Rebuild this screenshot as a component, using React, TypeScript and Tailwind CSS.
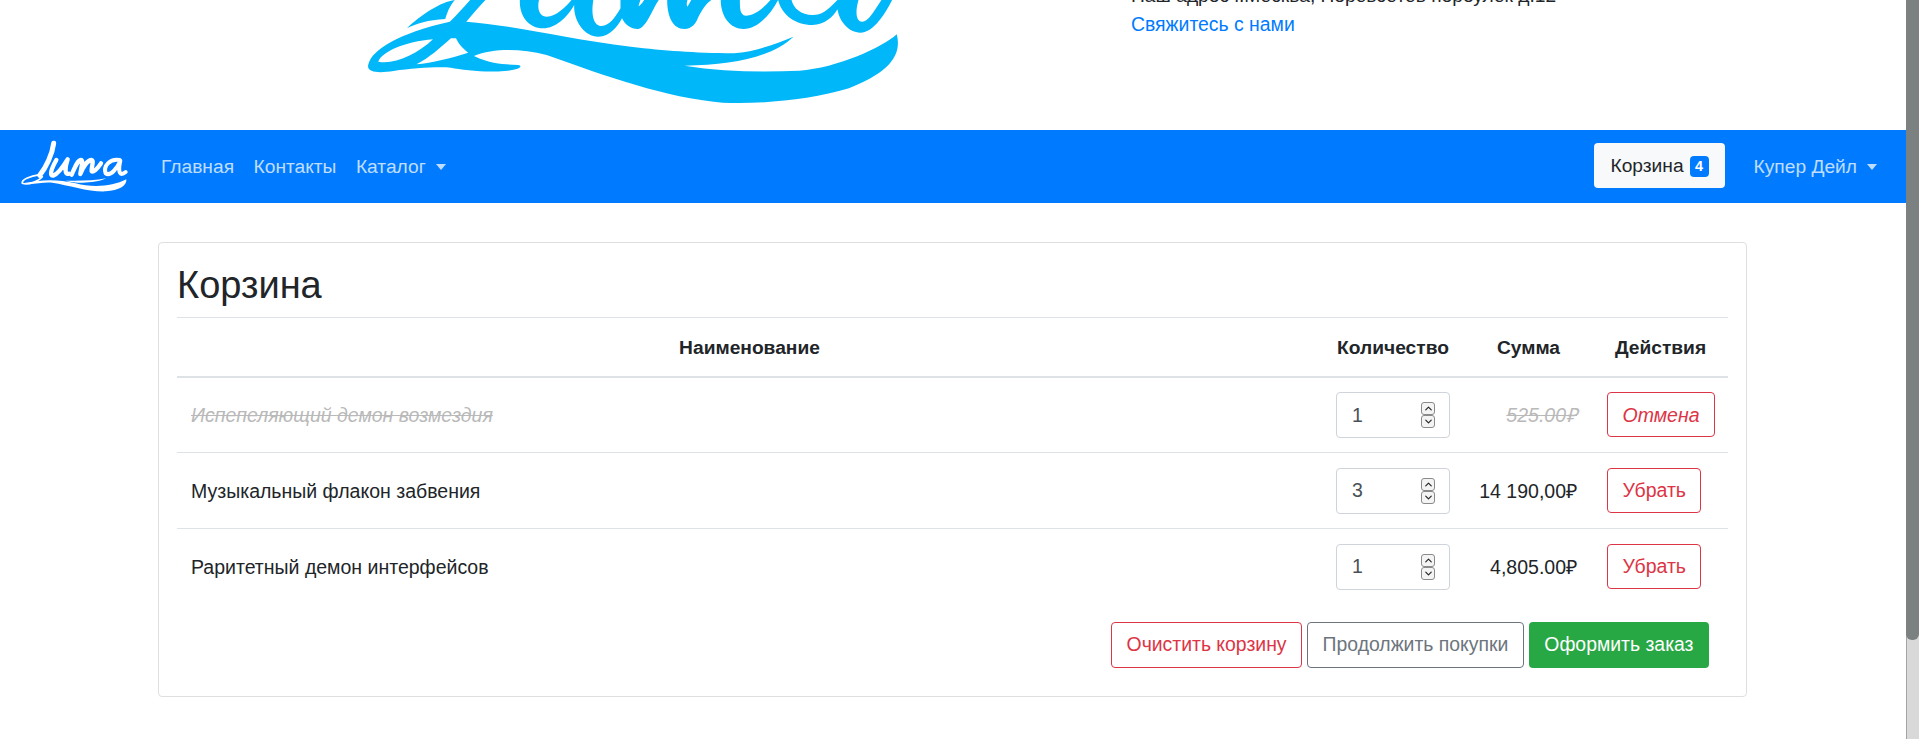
import React from 'react';
import { ChevronDown, ChevronUp } from 'lucide-react';

const font = { fontFamily: '"Liberation Sans", Arial, sans-serif' };

// traced from the reference, coordinates are 1568x390 over 600x130
function BigLogo() {
  return (
    <svg className="absolute left-[340px] top-0" width="600" height="130" viewBox="0 0 1568 390" preserveAspectRatio="none" fill="#00b7f9">
      <path
        fillRule="evenodd"
        d="M75 190C85 150 150 100 287 65C305 45 325 20 340 0L380 0C362 22 345 45 330 65C450 75 590 117 760 140C850 152 920 158 1030 160C1090 155 1140 130 1185 110C1130 170 1030 195 900 197C1000 215 1100 217 1200 212C1300 205 1420 140 1455 103C1470 170 1430 220 1330 265C1230 300 1100 313 1000 308C850 293 700 230 540 165C470 145 400 145 350 168C400 195 430 192 465 195C480 198 470 210 430 213C380 218 320 210 290 203C250 200 190 205 140 213C100 220 65 218 75 190ZM100 185C140 195 200 165 243 118C170 125 110 155 100 185ZM200 193C240 188 290 175 335 158C315 140 310 130 303 115L290 115C260 145 235 172 200 193Z"
      />
      <path d="M175 85C210 45 265 5 300 0C285 20 280 40 275 57C230 60 200 70 175 85Z" />
      <path d="M470 0C468 50 495 85 530 85C565 85 595 50 612 15C610 65 640 110 675 110C705 110 725 80 737 55C745 75 760 87 778 87C800 85 815 30 833 0L795 0C788 12 783 18 780 18L785 0L733 0L733 25C720 50 705 78 683 78C665 78 655 50 662 0L605 0C590 20 565 50 540 50C520 50 515 25 520 0Z" />
      <path d="M855 0C855 50 870 87 900 87C920 87 930 70 935 55C945 30 958 10 970 0L918 0L908 20C905 15 906 8 908 0Z" />
      <path d="M995 0C995 50 1020 87 1055 87C1090 87 1125 45 1145 0C1155 45 1190 75 1235 75C1265 75 1290 50 1300 28C1305 65 1330 98 1360 98C1395 98 1425 40 1443 0L1415 0C1395 35 1380 65 1365 65C1350 65 1345 40 1355 0L1300 0C1270 35 1260 45 1235 45C1205 45 1185 25 1180 0L1125 0C1110 20 1085 47 1060 47C1045 45 1045 25 1045 0Z" />
    </svg>
  );
}

function NavLogo() {
  return (
    <svg width="130" height="73" viewBox="0 0 390 219" className="shrink-0">
      <g fill="none" stroke="white" strokeLinecap="round" strokeLinejoin="round">
        <path strokeWidth="15" d="M134 40C130 72 112 112 92 136" />
        <path strokeWidth="5" d="M92 134C62 138 36 150 40 160C60 168 92 150 100 140" />
        <path strokeWidth="13" d="M142 90C126 118 120 140 134 136C150 131 165 106 176 88C168 112 166 136 180 131" />
        <path strokeWidth="13" d="M188 134C196 116 204 92 216 90C224 90 216 116 214 132C222 112 236 90 248 90C256 92 246 114 248 124C252 128 264 118 276 100" />
        <path strokeWidth="12" d="M332 90C304 84 282 108 290 130C304 140 326 114 334 92C328 116 328 144 350 126" />
      </g>
      <path fill="white" d="M40 160C90 150 140 145 200 160C250 174 310 170 352 148C354 168 330 181 290 184C240 186 180 166 130 158C100 155 70 166 40 160Z" />
      <path fill="white" d="M170 152C210 153 255 152 292 145C260 160 205 162 170 152Z" />
    </svg>
  );
}

function Spin({ value }: { value: number }) {
  return (
    <div className="flex items-center w-[114px] h-[46px] pl-[15px] pr-[14px] bg-white border border-[#ced4da] rounded-[4px]">
      <input readOnly defaultValue={value} style={font} className="flex-1 min-w-0 text-[19.5px] text-[#495057] outline-none" />
      <div className="flex flex-col shrink-0 text-[#222]">
        <span className="flex items-center justify-center w-[14px] h-[13px] bg-[#f4f4f4] border border-[#8a8a8a] rounded-[3px]"><ChevronUp size={11} strokeWidth={2.5} /></span>
        <span className="flex items-center justify-center w-[14px] h-[13px] bg-[#f4f4f4] border border-[#8a8a8a] rounded-[3px]"><ChevronDown size={11} strokeWidth={2.5} /></span>
      </div>
    </div>
  );
}

function Row({ name, qty, sum, action, cancelled }: { name: string; qty: number; sum: string; action: string; cancelled?: boolean }) {
  const text = cancelled ? 'italic line-through text-[#b9b9b9]' : 'text-[#212529]';
  return (
    <div className="flex items-center h-[75.6px] text-[19.5px] border-b border-[#dee2e6] last:border-b-0">
      <div className={`flex-1 pl-[14px] pt-[1px] ${text}`}>{name}</div>
      <div className="w-[142px] px-[14px]"><Spin value={qty} /></div>
      <div className={`w-[129px] pr-[16px] pt-[1px] text-right ${text}`}>{sum}</div>
      <div className="w-[135px] pl-[14px]">
        <button className={`h-[45px] px-[14.5px] border border-[#dc3545] rounded-[4px] text-[#dc3545] ${cancelled ? 'italic' : ''}`}>{action}</button>
      </div>
    </div>
  );
}

export default function App() {
  return (
    <div style={font} className="flex h-[739px] overflow-hidden bg-white text-[19.2px] leading-[28.8px] text-[#212529]">
      <div className="flex-1 min-w-0">
        <header className="relative h-[130px] overflow-hidden">
          <BigLogo />
          <div className="absolute left-[1131px] top-[-18px]">
            <div>Наш адрес г.Москва, Перовсотов переулок д.12</div>
            <a className="block -mt-px text-[#007bff] text-[19.4px]">Свяжитесь с нами</a>
          </div>
        </header>

        <nav className="flex items-center h-[73px] bg-[#007bff] pl-[9px] pr-[29px]">
          <NavLogo />
          <div className="flex items-center ml-[22px] pt-[1px] gap-[19.5px] text-white/75">
            <span>Главная</span>
            <span>Контакты</span>
            <span className="flex items-center">Каталог<i className="ml-[10px] border-x-[5px] border-t-[6px] border-x-transparent border-t-white/75" /></span>
          </div>
          <div className="ml-auto flex items-center">
            <button className="flex items-center h-[45px] mb-[2px] pt-[1px] px-4 bg-[#f8f9fa] rounded-[4px] text-[#212529]">
              Корзина
              <span className="ml-[6px] flex items-center justify-center w-[19px] h-[21px] bg-[#007bff] text-white text-[14.4px] font-bold rounded-[4px]">4</span>
            </button>
            <span className="flex items-center ml-[29px] pt-[1px] text-white/75">Купер Дейл<i className="ml-[10px] border-x-[5px] border-t-[6px] border-x-transparent border-t-white/75" /></span>
          </div>
        </nav>

        <main className="ml-[158px] mt-[39px] w-[1589px] h-[455px] border border-[#dfdfdf] rounded-[4px] px-[18px]">
          <h1 className="h-[75px] pt-[19px] text-[38px] leading-[46px] border-b border-[#dee2e6]">Корзина</h1>
          <div className="flex items-center h-[60px] pt-[2px] font-bold border-b-2 border-[#dee2e6]">
            <div className="flex-1 text-center">Наименование</div>
            <div className="w-[142px] text-center">Количество</div>
            <div className="w-[129px] text-center">Сумма</div>
            <div className="w-[135px] text-center">Действия</div>
          </div>
          <div className="-mt-[0.4px]">
            <Row name="Испепеляющий демон возмездия" qty={1} sum="525.00₽" action="Отмена" cancelled />
            <Row name="Музыкальный флакон забвения" qty={3} sum="14 190,00₽" action="Убрать" />
            <Row name="Раритетный демон интерфейсов" qty={1} sum="4,805.00₽" action="Убрать" />
          </div>
          <div className="flex justify-end gap-[5px] mt-[17.5px] pr-[19px] text-[19.4px]">
            <button className="h-[46px] px-[14.5px] border border-[#dc3545] rounded-[4px] text-[#dc3545]">Очистить корзину</button>
            <button className="h-[46px] px-[14.5px] border border-[#6c757d] rounded-[4px] text-[#6c757d]">Продолжить покупки</button>
            <button className="h-[46px] px-[15.5px] bg-[#28a745] rounded-[4px] text-white">Оформить заказ</button>
          </div>
        </main>
      </div>
      <aside className="w-[13px] shrink-0 bg-[#d9d9d9] border-l border-[#a3a3a3]">
        <div className="h-[640px] bg-[#7b8080] rounded-b-[6px] -ml-px" />
      </aside>
    </div>
  );
}
